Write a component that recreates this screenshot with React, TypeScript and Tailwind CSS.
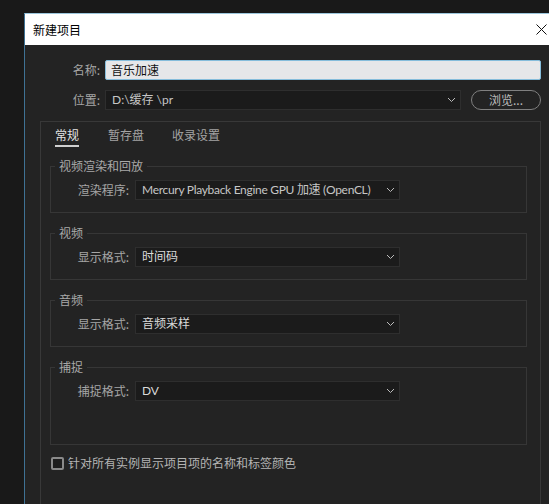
import React from 'react';

const FONT = "font-['Noto_Sans_CJK_SC','Noto_Sans',sans-serif]";
const VALUE_FONT = "font-['Lato','Noto_Sans_CJK_SC',sans-serif]";

const Chevron: React.FC = () => (
  <svg width="9" height="6" viewBox="0 0 9 6" className="shrink-0">
    <path d="M1 1l3.5 3.5L8 1" fill="none" stroke="#bcbcbc" strokeWidth="1" />
  </svg>
);

interface SelectProps {
  value: string;
  width: string;
  dim?: boolean;
  tight?: boolean;
}

const Select: React.FC<SelectProps> = ({ value, width, dim, tight }) => (
  <div
    className={`${width} h-[20px] flex items-center bg-[#1b1b1b] border border-[#2e2e2e] pl-[6px] pr-[4px] text-[12px] leading-[18px] ${dim ? 'text-[#c6c6c6]' : 'text-[#dadada]'}`}
  >
    <span className={`${VALUE_FONT} ${tight ? 'tracking-[-0.3px]' : ''} flex-1 whitespace-nowrap overflow-hidden`}>{value}</span>
    <Chevron />
  </div>
);

interface GroupProps {
  title: string;
  label: string;
  value: string;
  dim?: boolean;
  tight?: boolean;
  first?: boolean;
  tall?: boolean;
}

const Group: React.FC<GroupProps> = ({ title, label, value, dim, tight, first, tall }) => (
  <fieldset
    className={`ml-[9px] w-[477px] border border-[#363636] ${first ? 'mt-[12px]' : 'mt-[13px]'} ${tall ? 'pb-[43px]' : 'pb-[12px]'}`}
  >
    <legend className="ml-[4px] px-[4px] text-[12px] leading-[14px] text-[#a9a9a9]">{title}</legend>
    <div className="flex items-center pt-[7px]">
      <div className="w-[78px] text-right text-[12px] leading-[20px] text-[#a6a6a6] whitespace-nowrap">{label}</div>
      <div className="ml-[6px]">
        <Select value={value} width="w-[265px]" dim={dim} tight={tight} />
      </div>
    </div>
  </fieldset>
);

const tabs = [
  { name: '常规', active: true, ml: 'ml-[14px]' },
  { name: '暂存盘', active: false, ml: 'ml-[29px]' },
  { name: '收录设置', active: false, ml: 'ml-[28px]' },
];

const App: React.FC = () => {
  return (
    <div className={`${FONT} w-[549px] h-[504px] overflow-hidden bg-[#191919] pt-[13px] pl-[24px] flex flex-col`}>
      <div className="flex-1 min-h-0 flex flex-col border-l border-t border-l-[#3f7294] border-t-[#9cc6dc]">
        {/* title bar */}
        <div className="h-[31px] shrink-0 bg-white flex items-center justify-between pl-[8px] pr-[2px]">
          <span className="text-[12px] leading-[16px] text-black">新建项目</span>
          <svg width="11" height="11" viewBox="0 0 11 11">
            <path d="M0.5 0.5l10 10M10.5 0.5l-10 10" stroke="#111" strokeWidth="1" fill="none" />
          </svg>
        </div>

        <div className="flex-1 min-h-0 bg-[#232323] flex flex-col pt-[15px]">
          {/* project name */}
          <div className="flex items-center h-[20px]">
            <div className="w-[75px] text-right text-[12px] leading-[20px] text-[#a6a6a6]">名称:</div>
            <div className="ml-[5px] w-[436px] h-[20px] flex items-center bg-[#e6e7e9] border border-[#86bddb] rounded-[2px] pl-[5px] text-[12px] leading-[18px] text-[#111]">
              音乐加速
            </div>
          </div>

          {/* location */}
          <div className="flex items-center h-[20px] mt-[10px]">
            <div className="w-[75px] text-right text-[12px] leading-[20px] text-[#a6a6a6]">位置:</div>
            <div className="ml-[5px]">
              <Select value="D:\缓存 \pr" width="w-[356px]" dim />
            </div>
            <button className="ml-[10px] w-[70px] h-[20px] rounded-full border border-[#808080] text-[12px] leading-[18px] text-[#bdbdbd]">
              浏览...
            </button>
          </div>

          {/* tab panel */}
          <div className="mt-[11px] ml-[15px] w-[501px] flex-1 border-t border-l border-r border-[#383838] flex flex-col">
            <div className="flex pt-[5px]">
              {tabs.map((t) => (
                <span
                  key={t.name}
                  className={`${t.ml} text-[12px] leading-[16px] pb-[2px] border-b-2 ${t.active ? 'text-[#e2e2e2] border-[#cfcfcf]' : 'text-[#a4a4a4] border-transparent'}`}
                >
                  {t.name}
                </span>
              ))}
            </div>

            <Group first title="视频渲染和回放" label="渲染程序:" value="Mercury Playback Engine GPU 加速 (OpenCL)" dim tight />
            <Group title="视频" label="显示格式:" value="时间码" />
            <Group title="音频" label="显示格式:" value="音频采样" />
            <Group tall title="捕捉" label="捕捉格式:" value="DV" />

            <label className="flex items-center mt-[11px] ml-[10px]">
              <span className="w-[13px] h-[13px] border-2 border-[#8a8a8a] rounded-[2px] bg-[#1e1e1e]" />
              <span className="ml-[4px] text-[12px] leading-[14px] text-[#b4b4b4]">针对所有实例显示项目项的名称和标签颜色</span>
            </label>
          </div>
        </div>
      </div>
    </div>
  );
};

export default App;
